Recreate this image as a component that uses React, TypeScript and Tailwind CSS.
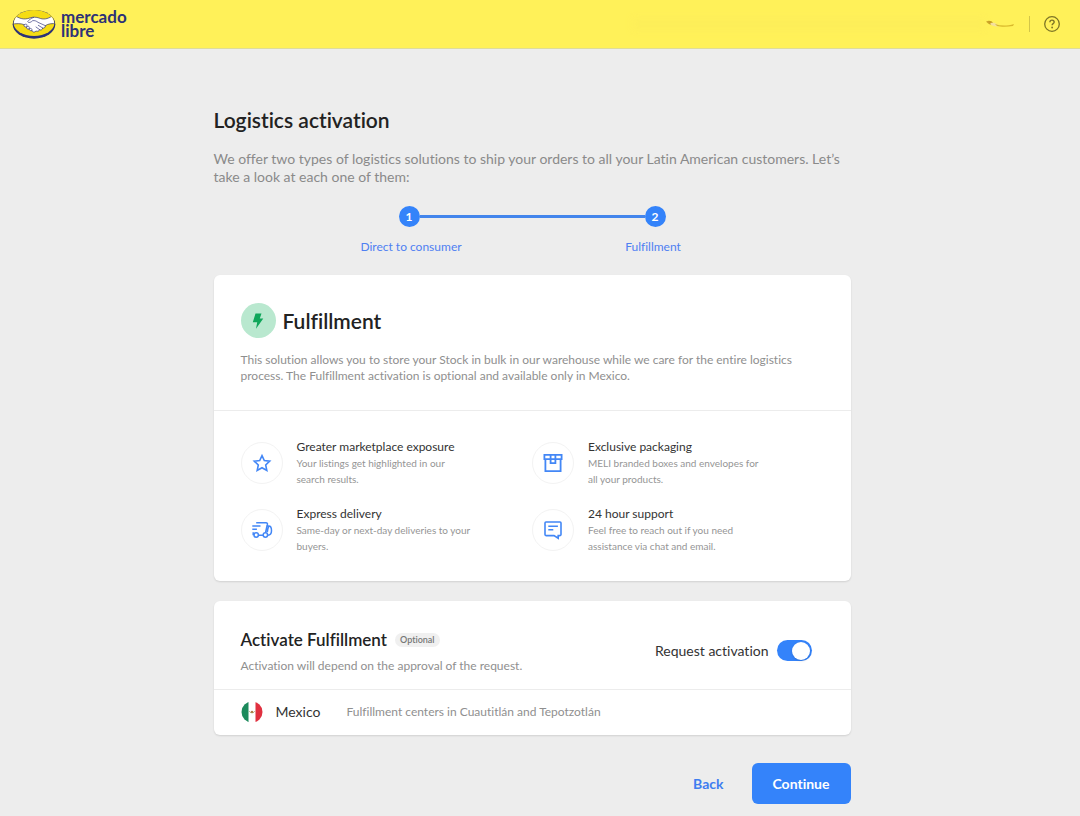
import React, { useState } from "react";

type Benefit = {
  title: string;
  lines: string[];
  icon: React.ReactNode;
};

const iconProps = {
  viewBox: "0 0 24 24",
  fill: "none",
  stroke: "currentColor",
  strokeWidth: 1.6,
  className: "w-6 h-6",
  "aria-hidden": true,
};

const benefits: Benefit[] = [
  {
    title: "Greater marketplace exposure",
    lines: ["Your listings get highlighted in our", "search results."],
    icon: (
      <svg {...iconProps}>
        <path d="M12 4.6l2.3 5 5.4.6-4 3.8 1.1 5.4-4.8-2.7-4.8 2.7 1.1-5.4-4-3.8 5.4-.6z" />
      </svg>
    ),
  },
  {
    title: "Exclusive packaging",
    lines: ["MELI branded boxes and envelopes for", "all your products."],
    icon: (
      <svg {...iconProps} strokeWidth={1.8}>
        <path d="M3.4 3.9h17.200v4.200H3.400zM4.400 8.100v12h15.200v-12M9.600 3.900v8.200h4.800V3.900" />
      </svg>
    ),
  },
  {
    title: "Express delivery",
    lines: ["Same-day or next-day deliveries to your", "buyers."],
    icon: (
      <svg {...iconProps} strokeWidth={1.5}>
        <path d="M6.2 4.800h9.800c1.100 0 1.600.6 1.400 1.600l-.4 1.600M2.300 8h8.200M2.300 11.200h4.600M3.200 14.200v2.300h.8M8.300 17.300h4.900M16.800 8h2c1.800 0 2.700 2.400 2.700 4.700 0 2.600-1 4.300-3.600 4.500M18.800 8c-.9 2.100-1.300 4-1.500 6.300M17 7.800l-1.500 6.900" />
        <circle cx="6.200" cy="17" r="2.200" />
        <circle cx="15.400" cy="17" r="2.200" />
      </svg>
    ),
  },
  {
    title: "24 hour support",
    lines: ["Feel free to reach out if you need", "assistance via chat and email."],
    icon: (
      <svg {...iconProps}>
        <path d="M5 4h14c.6 0 1 .4 1 1v11.600c0 .6-.4 1-1 1h-1.800v2.600l-4.200-2.600H5c-.6 0-1-.4-1-1V5c0-.6.4-1 1-1zM7.300 8.300h9.600M7.300 11.700h5" />
      </svg>
    ),
  },
];

function Logo() {
  return (
    <a href="#" aria-label="mercado libre" className="flex items-center gap-[5px] text-[#2d3277]">
      <svg viewBox="0 0 130 90" className="w-11 h-[30px]" aria-hidden="true">
        <defs>
          <clipPath id="oval">
            <ellipse cx="65" cy="42" rx="60" ry="38" />
          </clipPath>
        </defs>
        <ellipse cx="65" cy="46" rx="64" ry="43" fill="#2d3277" />
        <ellipse cx="65" cy="42" rx="61" ry="39" fill="#f5dc14" />
        <g clipPath="url(#oval)" stroke="#2d3277" strokeWidth="2" strokeLinejoin="round" strokeLinecap="round">
          <path
            fill="#fff"
            d="M10 21C28 33 42 31 55 26C62 24 72 24 80 27C92 32 105 31 120 21L134 44C118 43 108 44 99 50C99 56 95 58 91 57C90 62 86 64 82 62C80 67 75 68 71 66C67 71 61 70 59 65C55 66 51 64 50 60C45 61 41 58 43 54C36 54 33 51 36 47C25 43 12 43 -2 46Z"
          />
          <path
            fill="none"
            d="M64 25C56 28 48 34 46 38C49 43 56 40 61 35C67 34 72 36 77 40L99 50M78 49L91 57M71 54L82 62M36 47C42 43 46 46 43 54C49 49 53 53 50 60C56 56 60 59 59 65"
          />
        </g>
      </svg>
      <span className="text-[17px] leading-[14px] font-bold">
        mercado
        <br />
        libre
      </span>
    </a>
  );
}

function Header() {
  return (
    <header className="flex h-[49px] items-center justify-between border-b border-[#dedc9b] bg-[#fff159] pl-3 pr-5">
      <Logo />
      <div className="flex items-center">
        <div className="h-3 w-88 bg-[#fdee59] blur-[3px]" />
        <svg viewBox="0 0 30 8" className="h-2 w-[30px]" aria-hidden="true">
          <path d="M1 1.500C4 0 7 1 8 3L6 5C4 4 2 3 1 1.500Z" fill="#c49a22" />
          <path d="M6 3C9 2 12 4 15 6C11 7 7 6 5 4Z" fill="#f3dfa0" />
          <path d="M10 4C16 6 22 6 29 4L28 6C22 7 16 7 12 6Z" fill="#d9b92c" />
        </svg>
        <span className="ml-[14px] mr-[14px] h-4 w-px bg-[#d3c648]" />
        <button type="button" aria-label="Help" className="text-[#7d7526]">
          <svg viewBox="0 0 16 16" className="h-4 w-4" fill="none" stroke="currentColor" aria-hidden="true">
            <circle cx="8" cy="8" r="7.300" strokeWidth="1.300" />
            <path d="M5.900 6.300c0-2.800 4.300-2.800 4.300-.2 0 1.500-2.100 1.500-2.100 3.200" strokeWidth="1.400" />
            <circle cx="8.100" cy="11.500" r=".9" fill="currentColor" stroke="none" />
          </svg>
        </button>
      </div>
    </header>
  );
}

function Steps() {
  return (
    <div className="mt-5">
      <div className="mx-auto flex w-[267px] items-center text-xs font-bold text-white">
        <span className="flex h-[21px] w-[21px] items-center justify-center rounded-full bg-[#3483fa]">1</span>
        <span className="h-[3px] flex-1 bg-[#4385ec]" />
        <span className="flex h-[21px] w-[21px] items-center justify-center rounded-full bg-[#3483fa]">2</span>
      </div>
      <div className="mx-auto mt-3 grid w-[484px] grid-cols-2 text-center text-xs text-[#4f80f2]">
        <span>Direct to consumer</span>
        <span>Fulfillment</span>
      </div>
    </div>
  );
}

function MexicoFlag() {
  return (
    <svg viewBox="0 0 22 22" className="h-[22px] w-[22px]" aria-hidden="true">
      <defs>
        <clipPath id="flag">
          <circle cx="11" cy="11" r="10.500" />
        </clipPath>
      </defs>
      <g clipPath="url(#flag)">
        <path fill="#fff" d="M0 0h22v22H0z" />
        <path fill="#1c8a5c" d="M0 0h7.500v22H0z" />
        <path fill="#e0303f" d="M14.500 0H22v22h-7.500z" />
      </g>
      <path d="M8.500 10.300c.5 2 4.500 2 5 0" stroke="#9c9a5c" strokeWidth="1" fill="none" />
      <circle cx="11" cy="10.800" r="1.100" fill="#a9763d" />
    </svg>
  );
}

export default function App() {
  const [requested, setRequested] = useState(true);

  return (
    <div className="min-h-screen bg-[#ededed] font-['Lato',sans-serif] text-[#333] [font-variant-ligatures:none]">
      <Header />
      <main className="pr-4 pb-3">
        <div className="mx-auto max-w-[637px]">
          <h1 className="pt-[59px] text-[21px] leading-6 font-semibold text-[#222]">Logistics activation</h1>
          <p className="mt-[18px] text-sm leading-[18px] text-[#8a8a8a]">
            We offer two types of logistics solutions to ship your orders to all your Latin American customers. Let’s
            take a look at each one of them:
          </p>

          <Steps />

          <section className="mt-5 rounded-md bg-white shadow-[0_1px_2px_rgba(0,0,0,0.12)]">
            <div className="border-b border-[#ececec] px-[27px] pt-7 pb-[26px]">
              <div className="flex items-center gap-[7px]">
                <span className="flex h-[35px] w-[35px] items-center justify-center rounded-full bg-[#b9e8cf]">
                  <svg viewBox="0 0 12 16" className="h-4 w-3" aria-hidden="true">
                    <path d="M3.500.5h6L7.800 5.600h3.500L4 15.800l1.200-6.600H.8z" fill="#0fa65a" />
                  </svg>
                </span>
                <h2 className="text-[21px] leading-6 font-semibold text-[#222]">Fulfillment</h2>
              </div>
              <p className="mt-[14px] text-xs text-[#8f8f8f]">
                This solution allows you to store your Stock in bulk in our warehouse while we care for the entire
                logistics process. The Fulfillment activation is optional and available only in Mexico.
              </p>
            </div>
            <ul className="grid grid-cols-2 gap-y-[19px] px-[27px] pt-7 pb-[27px]">
              {benefits.map((benefit) => (
                <li key={benefit.title} className="flex items-center gap-[14px]">
                  <span className="flex h-[42px] w-[42px] shrink-0 items-center justify-center rounded-full border border-[#f3f3f3] text-[#4387f6]">
                    {benefit.icon}
                  </span>
                  <div>
                    <h3 className="text-xs">{benefit.title}</h3>
                    <p className="text-[10px] leading-4 text-[#959595]">
                      {benefit.lines[0]}
                      <br />
                      {benefit.lines[1]}
                    </p>
                  </div>
                </li>
              ))}
            </ul>
          </section>

          <section className="mt-5 rounded-md bg-white shadow-[0_1px_2px_rgba(0,0,0,0.12)]">
            <div className="flex items-start justify-between border-b border-[#ececec] pt-[29px] pr-[39px] pb-[15px] pl-[27px]">
              <div>
                <div className="flex items-center gap-2">
                  <h2 className="text-[17px] leading-5 font-semibold text-[#222]">Activate Fulfillment</h2>
                  <span className="rounded-full bg-[#f0f0f0] px-[5px] text-[9px] leading-[14px] font-semibold text-[#777]">
                    Optional
                  </span>
                </div>
                <p className="mt-2 text-xs text-[#8f8f8f]">
                  Activation will depend on the approval of the request.
                </p>
              </div>
              <label className="flex items-center gap-2 pt-[10px] text-sm">
                Request activation
                <input
                  type="checkbox"
                  checked={requested}
                  onChange={(e) => setRequested(e.target.checked)}
                  className="flex h-[21px] w-[35px] appearance-none items-center rounded-full bg-[#bfbfbf] px-[2px] before:h-[18px] before:w-[18px] before:rounded-full before:bg-white before:shadow checked:justify-end checked:bg-[#3483fa]"
                />
              </label>
            </div>
            <div className="flex items-center px-[27px] pt-[11px] pb-3">
              <MexicoFlag />
              <span className="ml-[13px] w-[71px] text-sm">Mexico</span>
              <span className="text-xs text-[#8f8f8f]">
                Fulfillment centers in Cuautitlán and Tepotzotlán
              </span>
            </div>
          </section>

          <div className="mt-7 flex justify-end gap-2 text-sm font-bold">
            <button type="button" className="px-5 text-[#3f7df0]">
              Back
            </button>
            <button type="button" className="h-[41px] w-[99px] rounded-md bg-[#3483fa] text-white">
              Continue
            </button>
          </div>
        </div>
      </main>
    </div>
  );
}
